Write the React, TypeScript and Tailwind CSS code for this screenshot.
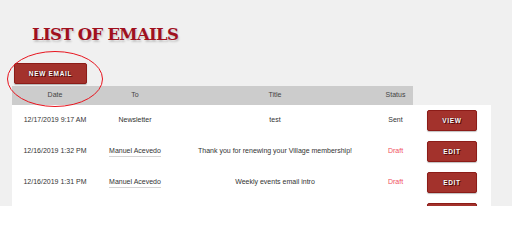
import React from "react";

type Row = {
  date: string;
  to: string;
  toLink?: boolean;
  title: string;
  status: "Sent" | "Draft";
};

const rows: Row[] = [
  { date: "12/17/2019 9:17 AM", to: "Newsletter", title: "test", status: "Sent" },
  {
    date: "12/16/2019 1:32 PM",
    to: "Manuel Acevedo",
    toLink: true,
    title: "Thank you for renewing your Village membership!",
    status: "Draft",
  },
  {
    date: "12/16/2019 1:31 PM",
    to: "Manuel Acevedo",
    toLink: true,
    title: "Weekly events email intro",
    status: "Draft",
  },
];

function RedButton({ label, className = "" }: { label?: string; className?: string }) {
  return (
    <button
      className={`flex items-center justify-center rounded-[2px] border border-[#8c1c18] bg-[#a3322c] font-bold text-white tracking-[0.7px] text-[6.5px] shadow-[0_1px_1px_rgba(0,0,0,0.25)] [text-shadow:0_0_1px_#3a0000,1px_1px_0_#5a0a0a] ${className}`}
    >
      {label}
    </button>
  );
}

export default function App() {
  return (
    <div className="relative h-[206px] w-[512px] overflow-hidden bg-[#f0f0f0] font-['Liberation_Sans',Arial,sans-serif]">
      <div className="pl-[12px] pt-[25px]">
        {/* Heading */}
        <h1 className="pl-[20px] font-['DejaVu_Serif',serif] text-[16.5px] font-bold leading-[20px] tracking-[-0.7px] text-[#a0101e] [text-shadow:1px_2px_2px_rgba(0,0,0,0.18)]">
          LIST OF EMAILS
        </h1>

        <div className="mt-[18px] pl-[2px]">
          <RedButton label="NEW EMAIL" className="h-[21px] w-[73px]" />
        </div>

        {/* Table */}
        <div className="mt-[2px] grid w-[479px] grid-cols-[86px_74px_206px_35px_78px] text-[7px] text-[#333]">
          <div className="flex h-[19px] items-center justify-center bg-[#cccccc] text-[#444]">Date</div>
          <div className="flex h-[19px] items-center justify-center bg-[#cccccc] text-[#444]">To</div>
          <div className="flex h-[19px] items-center justify-center bg-[#cccccc] text-[#444]">Title</div>
          <div className="flex h-[19px] items-center justify-center bg-[#cccccc] text-[#444]">Status</div>
          <div className="h-[19px]" />

          {rows.map((r, i) => (
            <React.Fragment key={i}>
              <div className="flex h-[31px] items-center justify-center bg-white">{r.date}</div>
              <div className="flex h-[31px] items-center justify-center bg-white">
                {r.toLink ? (
                  <span className="border-b border-[#d4d4d4] pb-[1px] leading-[8px]">{r.to}</span>
                ) : (
                  r.to
                )}
              </div>
              <div className="flex h-[31px] items-center justify-center bg-white">{r.title}</div>
              <div
                className={`flex h-[31px] items-center justify-center bg-white ${
                  r.status === "Draft" ? "text-[#f0505f]" : ""
                }`}
              >
                {r.status}
              </div>
              <div className="flex h-[31px] items-center justify-center bg-white">
                <RedButton label={r.status === "Sent" ? "VIEW" : "EDIT"} className="h-[21px] w-[50px]" />
              </div>
            </React.Fragment>
          ))}

          {/* next row, only its button top shows */}
          <div className="col-span-4 h-[31px] bg-white" />
          <div className="flex h-[31px] items-start justify-center bg-white pt-[5px]">
            <RedButton className="h-[21px] w-[50px]" />
          </div>
        </div>
      </div>

      {/* Hand-drawn annotation ellipse */}
      <svg
        className="pointer-events-none absolute left-[6px] top-[50px]"
        width="98"
        height="58"
        viewBox="0 0 98 58"
      >
        <ellipse cx="49" cy="29" rx="47.5" ry="27.5" fill="none" stroke="#e8141e" strokeWidth="1" />
      </svg>
    </div>
  );
}
